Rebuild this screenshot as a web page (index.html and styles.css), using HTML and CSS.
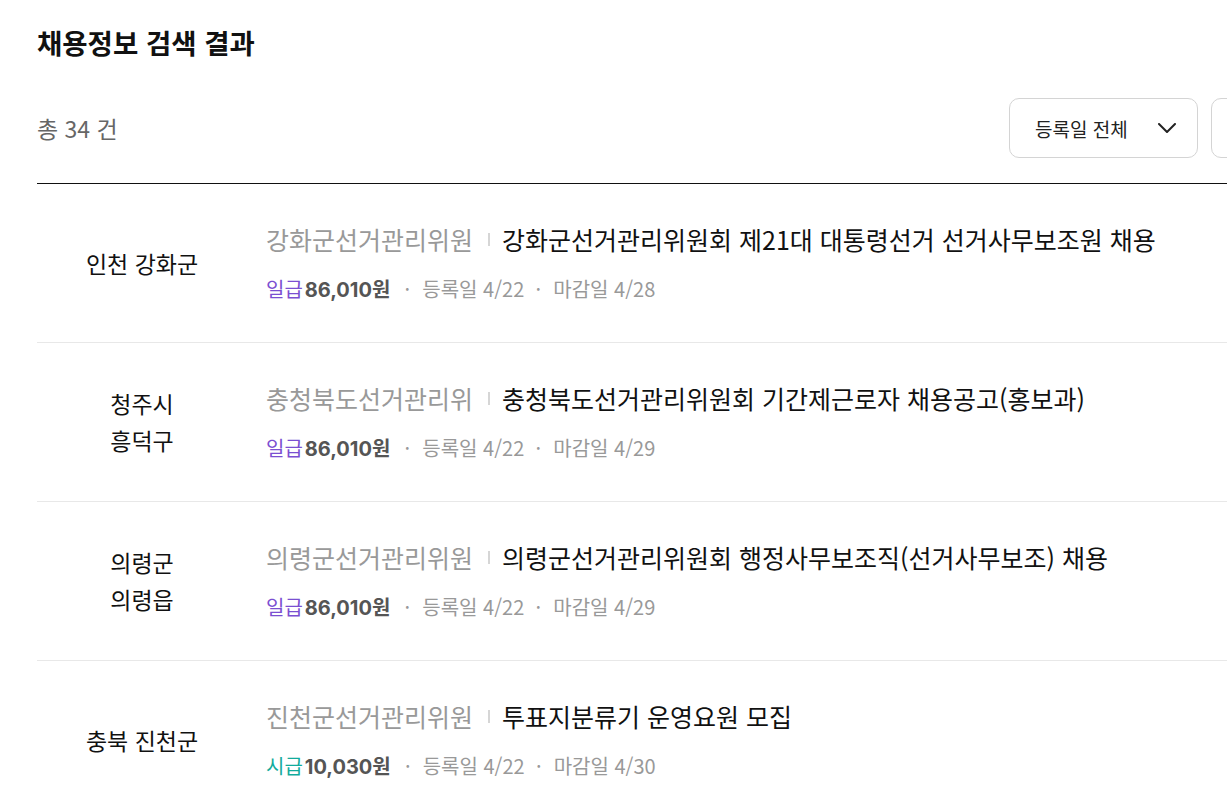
FILE: index.html
```html
<!DOCTYPE html>
<html lang="ko">
<head>
    <meta charset="UTF-8">
    <meta name="viewport" content="width=device-width, initial-scale=1.0">
    <link rel="stylesheet" href="styles.css">
</head>
<body>

    <main class="results">
        <h1 class="results__title">채용정보 검색 결과</h1>

        <div class="toolbar">
            <p class="toolbar__count">총 34 건</p>
            <div class="toolbar__filters">
                <button class="select">
                    <span>등록일 전체</span>
                    <svg width="18" height="10" viewBox="0 0 18 10" fill="none">
                        <path d="M1 1l8 8 8-8" stroke="#222" stroke-width="2" stroke-linecap="round" stroke-linejoin="round"/>
                    </svg>
                </button>
                <button class="select"><span>지역 전체</span></button>
            </div>
        </div>

        <ul class="job-list">
            <li class="job">
                <div class="job__area">인천 강화군</div>
                <div class="job__body">
                    <div class="job__head">
                        <span class="job__org">강화군선거관리위원</span>
                        <span class="job__bar"></span>
                        <span class="job__title">강화군선거관리위원회 제21대 대통령선거 선거사무보조원 채용</span>
                    </div>
                    <div class="job__meta"><span class="pay pay--daily">일급</span><b class="wage">86,010원</b><span class="dot">·</span><span>등록일 4/22</span><span class="dot">·</span><span>마감일 4/28</span></div>
                </div>
            </li>
            <li class="job">
                <div class="job__area">청주시<br>흥덕구</div>
                <div class="job__body">
                    <div class="job__head">
                        <span class="job__org">충청북도선거관리위원회</span>
                        <span class="job__bar"></span>
                        <span class="job__title">충청북도선거관리위원회 기간제근로자 채용공고(홍보과)</span>
                    </div>
                    <div class="job__meta"><span class="pay pay--daily">일급</span><b class="wage">86,010원</b><span class="dot">·</span><span>등록일 4/22</span><span class="dot">·</span><span>마감일 4/29</span></div>
                </div>
            </li>
            <li class="job">
                <div class="job__area">의령군<br>의령읍</div>
                <div class="job__body">
                    <div class="job__head">
                        <span class="job__org">의령군선거관리위원</span>
                        <span class="job__bar"></span>
                        <span class="job__title">의령군선거관리위원회 행정사무보조직(선거사무보조) 채용</span>
                    </div>
                    <div class="job__meta"><span class="pay pay--daily">일급</span><b class="wage">86,010원</b><span class="dot">·</span><span>등록일 4/22</span><span class="dot">·</span><span>마감일 4/29</span></div>
                </div>
            </li>
            <li class="job">
                <div class="job__area">충북 진천군</div>
                <div class="job__body">
                    <div class="job__head">
                        <span class="job__org">진천군선거관리위원</span>
                        <span class="job__bar"></span>
                        <span class="job__title">투표지분류기 운영요원 모집</span>
                    </div>
                    <div class="job__meta"><span class="pay pay--hourly">시급</span><b class="wage">10,030원</b><span class="dot">·</span><span>등록일 4/22</span><span class="dot">·</span><span>마감일 4/30</span></div>
                </div>
            </li>
        </ul>
    </main>

</body>
</html>
```

FILE: styles.css
```css
body {
    font-family: 'Noto Sans CJK KR', 'Noto Sans', sans-serif;
    margin: 0;
    padding: 0;
    background-color: #fff;
    color: #111;
    overflow: hidden;
}

.results {
    padding: 22px 0 0 37px;
    width: 1363px;
}

.results__title {
    margin: 0;
    font-size: 27.5px;
    font-weight: bold;
    line-height: 40px;
}

/* count + filter buttons */
.toolbar {
    display: flex;
    align-items: center;
    justify-content: space-between;
    margin-top: 36px;
    padding-bottom: 25px;
    border-bottom: 1px solid #111;
}

.toolbar__count {
    margin: 0;
    font-size: 23px;
    color: #666;
}

.toolbar__filters {
    display: flex;
    gap: 13px;
}

.select {
    display: flex;
    align-items: center;
    justify-content: space-between;
    width: 189px;
    height: 60px;
    padding: 0 21px 0 25px;
    border: 1px solid #d4d4d4;
    border-radius: 10px;
    background: #fff;
    font-family: inherit;
    font-size: 19px;
    color: #222;
}

/* job rows */
.job-list {
    list-style: none;
    margin: 0;
    padding: 0;
}

.job {
    display: flex;
    align-items: center;
    height: 158px;
    border-bottom: 1px solid #e8e8e8;
}

.job__area {
    width: 210px;
    flex-shrink: 0;
    text-align: center;
    font-size: 23px;
    line-height: 37px;
    color: #111;
}

.job__body {
    padding-left: 19px;
}

.job__head {
    display: flex;
    align-items: center;
    font-size: 25px;
    line-height: 32px;
    white-space: nowrap;
}

.job__org {
    width: 206px;
    overflow: hidden;
    color: #999;
}

.job__bar {
    width: 2px;
    height: 13px;
    margin: 2px 12px 0 16px;
    background-color: #d6d6d6;
}

.job__title {
    color: #111;
}

.job__meta {
    margin-top: 20px;
    font-size: 20px;
    line-height: 28px;
    color: #999;
    white-space: nowrap;
}

.pay--daily {
    color: #7b4fd1;
}

.pay--hourly {
    color: #12ab9c;
}

.wage {
    margin: 0 3px 0 2px;
    font-family: Inter, 'Noto Sans CJK KR', sans-serif;
    color: #555;
}

.dot {
    display: inline-block;
    width: 6px;
    margin: 0 12px 0 11px;
    text-align: center;
}
```
